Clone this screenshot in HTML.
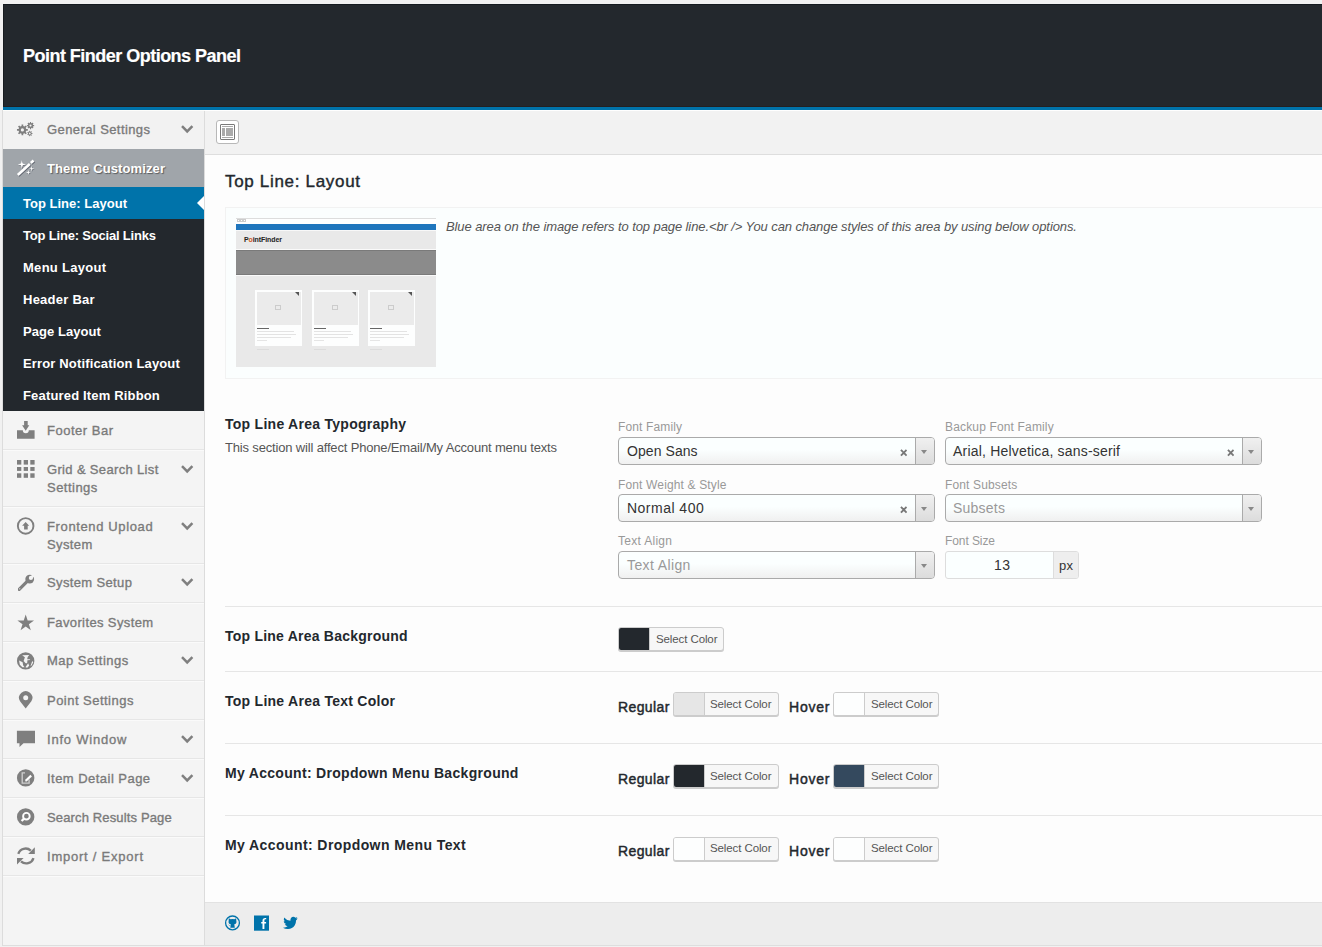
<!DOCTYPE html>
<html><head><meta charset="utf-8">
<style>
*{box-sizing:border-box;margin:0;padding:0}
html,body{width:1322px;height:947px;overflow:hidden;background:#f1f1f1;font-family:"Liberation Sans",sans-serif;position:relative}
.a{position:absolute}
.t{position:absolute;white-space:nowrap;line-height:1}
#hdr{left:3px;top:4px;width:1319px;height:103px;background:#23282d;border-top:1px solid #141a20;border-left:1px solid #181c20;border-bottom:1px solid #222022}
#hdrline{left:3px;top:107px;width:1319px;height:3px;background:#0073aa}
#side{left:3px;top:110px;width:202px;height:836px;background:#f4f4f4;border-right:1px solid #dcdcdc;border-bottom:1px solid #dedede}
#toolbar{left:205px;top:110px;width:1117px;height:45px;background:#f2f2f2;border-top:1px solid #fff;border-bottom:1px solid #dedede}
#main{left:205px;top:155px;width:1117px;height:747px;background:#fdfdfd}
#footer{left:205px;top:902px;width:1117px;height:44px;background:#ededed;border-top:1px solid #e2e2e2;border-bottom:1px solid #dedede}
.sep{position:absolute;left:3px;width:201px;height:1px;background:#e6e6e6;box-shadow:0 1px 0 #fafafa}
.rsep{position:absolute;left:225px;width:1097px;height:1px;background:#e6e6e6}
.sel{position:absolute;height:28px;border:1px solid #aaa;border-radius:4px;background:linear-gradient(to bottom,#fbffff 0%,#fbffff 45%,#f0f0f0 100%)}
.sel .ar{position:absolute;right:0;top:0;width:19px;height:26px;border-left:1px solid #aaa;border-radius:0 3px 3px 0;background:linear-gradient(to bottom,#f0f0f0 0%,#dcdcdc 100%)}
.sel .ar:after{content:"";position:absolute;left:5px;top:11.5px;border-left:3px solid transparent;border-right:3px solid transparent;border-top:4.5px solid #888}
.sel .x{position:absolute;right:27px;top:11px;width:7.5px;height:7.5px}
.cb{position:absolute;width:106px;height:24px;border:1px solid #ccc;border-radius:3px;background:#f7f7f7;box-shadow:0 1px 0 #ccc;overflow:hidden}
.cb .sw{position:absolute;left:0;top:0;width:31px;height:22px;border-right:1px solid #ccc}
.ico{position:absolute}
.chev{position:absolute;left:181px;width:13px;height:9px}
</style></head><body>
<div id="hdr" class="a"></div>
<div id="hdrline" class="a"></div>
<div id="side" class="a"></div>
<div class="a" style="left:2px;top:110px;width:1px;height:836px;background:#dcdcdc"></div>
<div class="a" style="left:3px;top:110px;width:1319px;height:1px;background:#fdfdfb"></div>
<!-- sidebar blocks -->
<div class="a" style="left:3px;top:111px;width:201px;height:38px;background:#f2f2f2"></div>
<div class="a" style="left:3px;top:149px;width:201px;height:38px;background:#a0a5aa"></div>
<div class="a" style="left:3px;top:187px;width:201px;height:32px;background:#0073aa"></div>
<div class="a" style="left:3px;top:219px;width:201px;height:192px;background:#23282d"></div>
<div class="a" style="left:197px;top:196px;width:0;height:0;border-top:7px solid transparent;border-bottom:7px solid transparent;border-right:7px solid #fff"></div>
<div class="sep" style="top:449px"></div>
<div class="sep" style="top:506px"></div>
<div class="sep" style="top:563px"></div>
<div class="sep" style="top:602px"></div>
<div class="sep" style="top:641px"></div>
<div class="sep" style="top:680px"></div>
<div class="sep" style="top:719px"></div>
<div class="sep" style="top:758px"></div>
<div class="sep" style="top:797px"></div>
<div class="sep" style="top:836px"></div>
<div class="sep" style="top:875px"></div>

<div id="toolbar" class="a"></div>
<div class="a" style="left:216px;top:120px;width:23px;height:24px;border:1px solid #b8b8b8;border-radius:3px;background:#fff"></div>
<div class="a" style="left:220px;top:124px;width:15px;height:16px;border:1px solid #7a7a7a;border-radius:1px;background:#fff"></div>
<div class="a" style="left:222px;top:126px;width:11px;height:1px;background:#aaa"></div>
<div class="a" style="left:222px;top:128px;width:3px;height:8px;background:#aaa"></div>
<div class="a" style="left:226px;top:128px;width:7px;height:8px;background:#aaa"></div>
<div class="a" style="left:222px;top:137px;width:11px;height:1px;background:#aaa"></div>

<div id="main" class="a"></div>
<!-- info box -->
<div class="a" style="left:225px;top:207px;width:1097px;height:172px;background:#fbfefe;border:1px solid #f2f2f2;border-right:none"></div>
<!-- preview image -->
<div class="a" style="left:236px;top:218px;width:200px;height:149px;background:#e9e9e9;overflow:hidden"><div class="a" style="left:0;top:0;width:200px;height:6px;background:#fff;border-top:1px solid #ddd"></div><div class="a" style="left:1px;top:1px;width:3px;height:3px;border:1px solid #ccc"></div><div class="a" style="left:4px;top:1px;width:3px;height:3px;border:1px solid #ccc"></div><div class="a" style="left:7px;top:1px;width:3px;height:3px;border:1px solid #ccc"></div><div class="a" style="left:0;top:6px;width:200px;height:6px;background:#1f76bd"></div><div class="a" style="left:0;top:12px;width:200px;height:1px;background:#f8f8f8"></div><div class="a" style="left:0;top:31px;width:200px;height:1px;background:#fafafa"></div><div class="a" style="left:8px;top:18px;font:bold 7px/1 'Liberation Sans';color:#222;letter-spacing:-0.1px">P<span style="color:#d35a20">o</span>intFinder</div><div class="a" style="left:0;top:32px;width:200px;height:25px;background:#8b8b8b;border-top:1px solid #7a7a7a;border-bottom:1px solid #7a7a7a"></div><div class="a" style="left:0;top:57px;width:200px;height:1px;background:#fafafa"></div><div class="a" style="left:19px;top:72px;width:47px;height:56px;background:#fdfefe"><div class="a" style="left:2px;top:2px;width:44px;height:33px;background:#ebebeb"></div><div class="a" style="left:40px;top:2px;width:0;height:0;border-top:4px solid #555;border-left:4px solid transparent"></div><div class="a" style="left:20px;top:15px;width:6px;height:5px;border:1px solid #ccc"></div><div class="a" style="left:2px;top:38px;width:12px;height:1px;background:#666"></div><div class="a" style="left:2px;top:41px;width:37px;height:1px;background:#e3e3e3"></div><div class="a" style="left:2px;top:44px;width:39px;height:1px;background:#e3e3e3"></div><div class="a" style="left:2px;top:47px;width:34px;height:1px;background:#e3e3e3"></div><div class="a" style="left:2px;top:50px;width:10px;height:1px;background:#e5e5e5"></div></div><div class="a" style="left:21px;top:131px;width:12px;height:1px;background:#dcdcdc"></div><div class="a" style="left:76px;top:72px;width:47px;height:56px;background:#fdfefe"><div class="a" style="left:2px;top:2px;width:44px;height:33px;background:#ebebeb"></div><div class="a" style="left:40px;top:2px;width:0;height:0;border-top:4px solid #555;border-left:4px solid transparent"></div><div class="a" style="left:20px;top:15px;width:6px;height:5px;border:1px solid #ccc"></div><div class="a" style="left:2px;top:38px;width:12px;height:1px;background:#666"></div><div class="a" style="left:2px;top:41px;width:37px;height:1px;background:#e3e3e3"></div><div class="a" style="left:2px;top:44px;width:39px;height:1px;background:#e3e3e3"></div><div class="a" style="left:2px;top:47px;width:34px;height:1px;background:#e3e3e3"></div><div class="a" style="left:2px;top:50px;width:10px;height:1px;background:#e5e5e5"></div></div><div class="a" style="left:78px;top:131px;width:12px;height:1px;background:#dcdcdc"></div><div class="a" style="left:132px;top:72px;width:47px;height:56px;background:#fdfefe"><div class="a" style="left:2px;top:2px;width:44px;height:33px;background:#ebebeb"></div><div class="a" style="left:40px;top:2px;width:0;height:0;border-top:4px solid #555;border-left:4px solid transparent"></div><div class="a" style="left:20px;top:15px;width:6px;height:5px;border:1px solid #ccc"></div><div class="a" style="left:2px;top:38px;width:12px;height:1px;background:#666"></div><div class="a" style="left:2px;top:41px;width:37px;height:1px;background:#e3e3e3"></div><div class="a" style="left:2px;top:44px;width:39px;height:1px;background:#e3e3e3"></div><div class="a" style="left:2px;top:47px;width:34px;height:1px;background:#e3e3e3"></div><div class="a" style="left:2px;top:50px;width:10px;height:1px;background:#e5e5e5"></div></div><div class="a" style="left:134px;top:131px;width:12px;height:1px;background:#dcdcdc"></div></div>

<div class="rsep" style="top:606px"></div>
<div class="rsep" style="top:671px"></div>
<div class="rsep" style="top:743px"></div>
<div class="rsep" style="top:815px"></div>

<!-- selects -->
<div class="sel" style="left:618px;top:437px;width:317px"><svg class="x" viewBox="0 0 8 8"><path d="M1 1L7 7M7 1L1 7" stroke="#777" stroke-width="2"/></svg><div class="ar"></div></div>
<div class="sel" style="left:945px;top:437px;width:317px"><svg class="x" viewBox="0 0 8 8"><path d="M1 1L7 7M7 1L1 7" stroke="#777" stroke-width="2"/></svg><div class="ar"></div></div>
<div class="sel" style="left:618px;top:494px;width:317px"><svg class="x" viewBox="0 0 8 8"><path d="M1 1L7 7M7 1L1 7" stroke="#777" stroke-width="2"/></svg><div class="ar"></div></div>
<div class="sel" style="left:945px;top:494px;width:317px"><div class="ar"></div></div>
<div class="sel" style="left:618px;top:551px;width:317px"><div class="ar"></div></div>
<div class="a" style="left:945px;top:551px;width:134px;height:28px;border:1px solid #ddd;border-radius:3px;background:#fbffff;overflow:hidden"><div class="a" style="left:107px;top:0;width:26px;height:26px;background:#eee;border-left:1px solid #ddd"></div></div>

<div class="cb" style="left:618px;top:627px"><div class="sw" style="background:#23282d"></div></div>
<div class="cb" style="left:673px;top:692px"><div class="sw" style="background:#e6e6e6"></div></div>
<div class="cb" style="left:833px;top:692px"><div class="sw" style="background:#fdfefe"></div></div>
<div class="cb" style="left:673px;top:764px"><div class="sw" style="background:#23282d"></div></div>
<div class="cb" style="left:833px;top:764px"><div class="sw" style="background:#34495e"></div></div>
<div class="cb" style="left:673px;top:837px"><div class="sw" style="background:#fdfefe"></div></div>
<div class="cb" style="left:833px;top:837px"><div class="sw" style="background:#fdfefe"></div></div>

<div id="footer" class="a"></div>
<svg class="ico" style="left:14px;top:118px" width="24" height="24" viewBox="0 0 24 24"><path fill-rule="evenodd" fill="#7f7f7f" d="M12.21 11.06 L13.83 11.04 L13.83 12.76 L12.21 12.74 L11.68 14.00 L12.85 15.13 L11.63 16.35 L10.50 15.18 L9.24 15.71 L9.26 17.33 L7.54 17.33 L7.56 15.71 L6.30 15.18 L5.17 16.35 L3.95 15.13 L5.12 14.00 L4.59 12.74 L2.97 12.76 L2.97 11.04 L4.59 11.06 L5.12 9.80 L3.95 8.67 L5.17 7.45 L6.30 8.62 L7.56 8.09 L7.54 6.47 L9.26 6.47 L9.24 8.09 L10.50 8.62 L11.63 7.45 L12.85 8.67 L11.68 9.80 Z M10.00 11.90 A1.6 1.6 0 1 0 6.80 11.90 A1.6 1.6 0 1 0 10.00 11.90 Z M19.14 7.02 L20.15 7.02 L20.15 8.18 L19.14 8.18 L18.77 9.06 L19.49 9.77 L18.67 10.59 L17.96 9.87 L17.08 10.24 L17.08 11.25 L15.92 11.25 L15.92 10.24 L15.04 9.87 L14.33 10.59 L13.51 9.77 L14.23 9.06 L13.86 8.18 L12.85 8.18 L12.85 7.02 L13.86 7.02 L14.23 6.14 L13.51 5.43 L14.33 4.61 L15.04 5.33 L15.92 4.96 L15.92 3.95 L17.08 3.95 L17.08 4.96 L17.96 5.33 L18.67 4.61 L19.49 5.43 L18.77 6.14 Z M17.60 7.60 A1.1 1.1 0 1 0 15.40 7.60 A1.1 1.1 0 1 0 17.60 7.60 Z M17.64 15.04 L18.46 15.02 L18.46 15.98 L17.64 15.96 L17.31 16.65 L17.83 17.28 L17.08 17.88 L16.59 17.23 L15.84 17.40 L15.68 18.20 L14.74 17.98 L14.94 17.19 L14.34 16.72 L13.62 17.09 L13.20 16.22 L13.94 15.88 L13.94 15.12 L13.20 14.78 L13.62 13.91 L14.34 14.28 L14.94 13.81 L14.74 13.02 L15.68 12.80 L15.84 13.60 L16.59 13.77 L17.08 13.12 L17.83 13.72 L17.31 14.35 Z M16.70 15.50 A0.9 0.9 0 1 0 14.90 15.50 A0.9 0.9 0 1 0 16.70 15.50 Z"/></svg>
<svg class="ico" style="left:14px;top:156px" width="24" height="24" viewBox="0 0 24 24"><line x1="4.5" y1="19.7" x2="16.5" y2="8.7" stroke="rgba(40,45,60,.55)" stroke-width="2.6"/><line x1="17.5" y1="7.7" x2="20.3" y2="5.3" stroke="rgba(40,45,60,.55)" stroke-width="2.6"/><line x1="3.8" y1="19.0" x2="15.8" y2="8.0" stroke="#fff" stroke-width="2.6"/><line x1="16.8" y1="7.0" x2="19.6" y2="4.6" stroke="#fff" stroke-width="2.6"/><path d="M8.5 4.8 L9.424 8.076 L12.7 9.0 L9.424 9.924 L8.5 13.2 L7.576 9.924 L4.3 9.0 L7.576 8.076 Z" fill="rgba(40,45,60,.55)"/><path d="M7.9 4.2 L8.824 7.476 L12.100000000000001 8.4 L8.824 9.324 L7.9 12.600000000000001 L6.976 9.324 L3.7 8.4 L6.976 7.476 Z" fill="#fff"/><path d="M18.2 10.6 L18.772 12.628 L20.8 13.2 L18.772 13.771999999999998 L18.2 15.799999999999999 L17.628 13.771999999999998 L15.6 13.2 L17.628 12.628 Z" fill="rgba(40,45,60,.55)"/><path d="M17.7 10.1 L18.272 12.128 L20.3 12.7 L18.272 13.271999999999998 L17.7 15.299999999999999 L17.128 13.271999999999998 L15.1 12.7 L17.128 12.128 Z" fill="#fff"/><path d="M14.9 14.4 L15.472000000000001 16.428 L17.5 17.0 L15.472000000000001 17.572 L14.9 19.6 L14.328 17.572 L12.3 17.0 L14.328 16.428 Z" fill="rgba(40,45,60,.55)"/><path d="M14.4 13.9 L14.972000000000001 15.928 L17.0 16.5 L14.972000000000001 17.072 L14.4 19.1 L13.828 17.072 L11.8 16.5 L13.828 15.928 Z" fill="#fff"/></svg>
<svg class="ico" style="left:14px;top:418px" width="24" height="24" viewBox="0 0 24 24"><path fill="#7f7f7f" d="M10.1 3 H13.7 V7.35 H15.3 L11.7 12.7 L8.1 7.35 H10.1 Z M3 12.2 H8.8 A3 3 0 0 0 14.8 12.2 H20.6 V20.8 H3 Z"/></svg>
<svg class="ico" style="left:14px;top:457px" width="24" height="24" viewBox="0 0 24 24"><rect x="3.0" y="3.0" width="4.3" height="4.6" fill="#7f7f7f"/><rect x="3.0" y="10.0" width="4.3" height="3.9" fill="#7f7f7f"/><rect x="3.0" y="16.3" width="4.3" height="4.5" fill="#7f7f7f"/><rect x="9.7" y="3.0" width="4.3" height="4.6" fill="#7f7f7f"/><rect x="9.7" y="10.0" width="4.3" height="3.9" fill="#7f7f7f"/><rect x="9.7" y="16.3" width="4.3" height="4.5" fill="#7f7f7f"/><rect x="16.3" y="3.0" width="4.3" height="4.6" fill="#7f7f7f"/><rect x="16.3" y="10.0" width="4.3" height="3.9" fill="#7f7f7f"/><rect x="16.3" y="16.3" width="4.3" height="4.5" fill="#7f7f7f"/></svg>
<svg class="ico" style="left:14px;top:514px" width="24" height="24" viewBox="0 0 24 24"><circle cx="11.66" cy="11.9" r="7.8" stroke="#7f7f7f" stroke-width="1.9" fill="none"/><path fill="#7f7f7f" d="M8.1 11.7 L11.65 8.0 L15.2 11.7 H13.7 V15.5 H10.1 V11.7 Z"/></svg>
<svg class="ico" style="left:14px;top:571px" width="24" height="24" viewBox="0 0 24 24"><defs><mask id="wm"><rect x="0" y="0" width="24" height="24" fill="#fff"/><circle cx="16.9" cy="6.9" r="2.1" fill="#000"/><path d="M15.98 5.98 L17.82 7.82 L22.06 3.58 L20.22 1.74 Z" fill="#000"/><circle cx="5.7" cy="17.8" r="0.75" fill="#666"/></mask></defs><g mask="url(#wm)"><line x1="5.2" y1="18.3" x2="13.2" y2="10.4" stroke="#7f7f7f" stroke-width="3.2" stroke-linecap="round"/><circle cx="15.7" cy="8.1" r="4.4" fill="#7f7f7f"/></g></svg>
<svg class="ico" style="left:14px;top:611px" width="24" height="24" viewBox="0 0 24 24"><path fill="#7f7f7f" d="M11.70 3.40 L13.66 9.45 L20.02 9.45 L14.88 13.18 L16.84 19.23 L11.70 15.49 L6.56 19.23 L8.52 13.18 L3.38 9.45 L9.74 9.45 Z"/></svg>
<svg class="ico" style="left:14px;top:649px" width="24" height="24" viewBox="0 0 24 24"><circle cx="11.66" cy="11.9" r="8.7" fill="#7f7f7f"/><path fill="#f4f4f4" d="M8.11 6.34 L15.21 6.08 L13.68 8.11 L13.18 10.14 L15.71 10.14 L16.22 10.90 L13.43 11.15 L13.18 14.19 L11.66 14.19 L9.63 11.91 L10.90 8.36 Z M5.07 11.40 L8.62 13.18 L9.12 16.22 L10.64 18.25 L8.36 18.25 L5.83 15.71 Z M11.40 18.25 L14.19 14.19 L15.21 16.73 L13.18 18.75 Z M18.25 11.91 L19.26 13.18 L17.74 16.22 L16.47 17.23 L17.49 14.19 Z"/></svg>
<svg class="ico" style="left:14px;top:688px" width="24" height="24" viewBox="0 0 24 24"><path fill="#7f7f7f" d="M11.7 20.6 L6.04 13.2 A6.6 6.6 0 1 1 17.36 13.2 Z"/><circle cx="11.7" cy="9.7" r="2.5" fill="#f4f4f4"/></svg>
<svg class="ico" style="left:14px;top:727px" width="24" height="24" viewBox="0 0 24 24"><path fill="#7f7f7f" d="M2.9 3.8 H21 V16.2 H9.5 L5.5 20 V16.2 H2.9 Z"/></svg>
<svg class="ico" style="left:14px;top:766px" width="24" height="24" viewBox="0 0 24 24"><circle cx="11.66" cy="11.9" r="8.7" fill="#7f7f7f"/><path d="M11 6.9 H8.2 V17.1 H15.1 V13.5" stroke="#d0d0d0" stroke-width="1.3" fill="none"/><line x1="11.8" y1="14.8" x2="17.2" y2="9.6" stroke="#fff" stroke-width="2.2"/><path d="M11.3 15.4 L11.2 13.6 L12.8 15.2 Z" fill="#eee"/></svg>
<svg class="ico" style="left:14px;top:805px" width="24" height="24" viewBox="0 0 24 24"><circle cx="11.66" cy="11.9" r="8.7" fill="#7f7f7f"/><circle cx="12.4" cy="11.15" r="3.3" stroke="#fff" stroke-width="1.9" fill="none"/><line x1="10.0" y1="13.6" x2="7.6" y2="16.0" stroke="#fff" stroke-width="2.2"/></svg>
<svg class="ico" style="left:14px;top:844px" width="24" height="24" viewBox="0 0 24 24"><path d="M4.3 9.9 A7.6 7.6 0 0 1 16.8 6.6" stroke="#7f7f7f" stroke-width="2.3" fill="none"/><path d="M20.8 3.3 V10.0 H14.2 Z" fill="#7f7f7f"/><path d="M19.5 14.1 A7.6 7.6 0 0 1 7.0 17.3" stroke="#7f7f7f" stroke-width="2.3" fill="none"/><path d="M3.0 20.5 V13.9 H9.6 Z" fill="#7f7f7f"/></svg>
<svg class="ico" style="left:180px;top:124px" width="15" height="11" viewBox="0 0 15 11"><path d="M2 2.2 L7.2 7.4 L12.4 2.2" stroke="#7f7f7f" stroke-width="2.5" fill="none"/></svg>
<svg class="ico" style="left:180px;top:464px" width="15" height="11" viewBox="0 0 15 11"><path d="M2 2.2 L7.2 7.4 L12.4 2.2" stroke="#7f7f7f" stroke-width="2.5" fill="none"/></svg>
<svg class="ico" style="left:180px;top:521px" width="15" height="11" viewBox="0 0 15 11"><path d="M2 2.2 L7.2 7.4 L12.4 2.2" stroke="#7f7f7f" stroke-width="2.5" fill="none"/></svg>
<svg class="ico" style="left:180px;top:577px" width="15" height="11" viewBox="0 0 15 11"><path d="M2 2.2 L7.2 7.4 L12.4 2.2" stroke="#7f7f7f" stroke-width="2.5" fill="none"/></svg>
<svg class="ico" style="left:180px;top:655px" width="15" height="11" viewBox="0 0 15 11"><path d="M2 2.2 L7.2 7.4 L12.4 2.2" stroke="#7f7f7f" stroke-width="2.5" fill="none"/></svg>
<svg class="ico" style="left:180px;top:734px" width="15" height="11" viewBox="0 0 15 11"><path d="M2 2.2 L7.2 7.4 L12.4 2.2" stroke="#7f7f7f" stroke-width="2.5" fill="none"/></svg>
<svg class="ico" style="left:180px;top:773px" width="15" height="11" viewBox="0 0 15 11"><path d="M2 2.2 L7.2 7.4 L12.4 2.2" stroke="#7f7f7f" stroke-width="2.5" fill="none"/></svg>
<svg class="ico" style="left:224px;top:914px" width="18" height="18" viewBox="0 0 18 18"><circle cx="8.5" cy="8.9" r="6.9" stroke="#0073aa" stroke-width="1.3" fill="none"/><path fill="#0073aa" d="M4.8 4.3 L6.6 5.3 Q8.5 4.8 10.4 5.3 L12.1 4.3 L12.3 6.6 Q12.8 8.6 12 9.4 Q11.2 10.1 10.3 10.2 L10.8 13.8 H6.3 L6.8 10.2 Q5.6 10.1 5 9.4 Q4.2 8.6 4.7 6.6 Z"/><path d="M6.5 11.6 Q5.2 11.8 4.6 10.8" stroke="#5aa0cc" stroke-width="0.9" fill="none"/></svg>
<svg class="ico" style="left:254px;top:915px" width="16" height="16" viewBox="0 0 16 16"><rect x="0" y="0.5" width="15" height="15.2" fill="#0073aa"/><path fill="#fff" d="M8.5 13.9 V8.4 H7.2 V7.1 H8.5 V5.6 Q8.5 2.9 11.2 2.9 H12.2 V4.2 H11.3 Q10.4 4.2 10.4 5.2 V7.1 H12.1 V8.4 H10.4 V13.9 Z"/></svg>
<svg class="ico" style="left:282px;top:915px" width="17" height="16" viewBox="0 0 17 16"><path fill="#0073aa" d="M15.6 3.2 Q14.9 3.6 14 3.7 Q15 3.1 15.3 2 Q14.4 2.5 13.4 2.7 Q12.5 1.8 11.3 1.8 Q8.6 2 8.4 5 Q8.4 5.4 8.5 5.7 Q4.7 5.5 2.1 2.4 Q1.2 4.5 3 6.3 Q2.3 6.3 1.7 5.9 Q1.8 8.3 4.1 9 Q3.4 9.2 2.7 9.1 Q3.4 11.2 5.6 11.3 Q3.5 12.9 0.9 12.7 Q3.2 14.2 6 14.1 Q10.3 14 12.8 10.3 Q14 8.3 14 6 V5.4 Q15 4.4 15.6 3.2 Z"/></svg>
<div class="t" style="left:23px;top:47px;font-size:18px;font-weight:bold;color:#fff;letter-spacing:-0.521px;-webkit-text-stroke:0.2px #fff;">Point Finder Options Panel</div>
<div class="t" style="left:47px;top:123px;font-size:13px;font-weight:normal;color:#7a7a7a;letter-spacing:0.410px;-webkit-text-stroke:0.35px #7a7a7a;">General Settings</div>
<div class="t" style="left:47px;top:162px;font-size:13px;font-weight:bold;color:#fff;letter-spacing:0.113px;text-shadow:1px 1px 1px rgba(0,0,0,.45);">Theme Customizer</div>
<div class="t" style="left:23px;top:197px;font-size:13px;font-weight:bold;color:#fff;letter-spacing:0.017px;">Top Line: Layout</div>
<div class="t" style="left:23px;top:229px;font-size:13px;font-weight:bold;color:#fff;letter-spacing:-0.190px;">Top Line: Social Links</div>
<div class="t" style="left:23px;top:261px;font-size:13px;font-weight:bold;color:#fff;letter-spacing:0.283px;">Menu Layout</div>
<div class="t" style="left:23px;top:293px;font-size:13px;font-weight:bold;color:#fff;letter-spacing:0.247px;">Header Bar</div>
<div class="t" style="left:23px;top:325px;font-size:13px;font-weight:bold;color:#fff;letter-spacing:0.050px;">Page Layout</div>
<div class="t" style="left:23px;top:357px;font-size:13px;font-weight:bold;color:#fff;letter-spacing:0.153px;">Error Notification Layout</div>
<div class="t" style="left:23px;top:389px;font-size:13px;font-weight:bold;color:#fff;letter-spacing:0.167px;">Featured Item Ribbon</div>
<div class="t" style="left:47px;top:424px;font-size:13px;font-weight:normal;color:#7a7a7a;letter-spacing:0.509px;-webkit-text-stroke:0.35px #7a7a7a;">Footer Bar</div>
<div class="t" style="left:47px;top:463px;font-size:13px;font-weight:normal;color:#7a7a7a;letter-spacing:0.341px;-webkit-text-stroke:0.35px #7a7a7a;">Grid &amp; Search List</div>
<div class="t" style="left:47px;top:481px;font-size:13px;font-weight:normal;color:#7a7a7a;letter-spacing:0.474px;-webkit-text-stroke:0.35px #7a7a7a;">Settings</div>
<div class="t" style="left:47px;top:520px;font-size:13px;font-weight:normal;color:#7a7a7a;letter-spacing:0.633px;-webkit-text-stroke:0.35px #7a7a7a;">Frontend Upload</div>
<div class="t" style="left:47px;top:538px;font-size:13px;font-weight:normal;color:#7a7a7a;letter-spacing:0.391px;-webkit-text-stroke:0.35px #7a7a7a;">System</div>
<div class="t" style="left:47px;top:576px;font-size:13px;font-weight:normal;color:#7a7a7a;letter-spacing:0.360px;-webkit-text-stroke:0.35px #7a7a7a;">System Setup</div>
<div class="t" style="left:47px;top:616px;font-size:13px;font-weight:normal;color:#7a7a7a;letter-spacing:0.379px;-webkit-text-stroke:0.35px #7a7a7a;">Favorites System</div>
<div class="t" style="left:47px;top:654px;font-size:13px;font-weight:normal;color:#7a7a7a;letter-spacing:0.484px;-webkit-text-stroke:0.35px #7a7a7a;">Map Settings</div>
<div class="t" style="left:47px;top:694px;font-size:13px;font-weight:normal;color:#7a7a7a;letter-spacing:0.475px;-webkit-text-stroke:0.35px #7a7a7a;">Point Settings</div>
<div class="t" style="left:47px;top:733px;font-size:13px;font-weight:normal;color:#7a7a7a;letter-spacing:0.795px;-webkit-text-stroke:0.35px #7a7a7a;">Info Window</div>
<div class="t" style="left:47px;top:772px;font-size:13px;font-weight:normal;color:#7a7a7a;letter-spacing:0.466px;-webkit-text-stroke:0.35px #7a7a7a;">Item Detail Page</div>
<div class="t" style="left:47px;top:811px;font-size:13px;font-weight:normal;color:#7a7a7a;letter-spacing:0.143px;-webkit-text-stroke:0.35px #7a7a7a;">Search Results Page</div>
<div class="t" style="left:47px;top:850px;font-size:13px;font-weight:normal;color:#7a7a7a;letter-spacing:0.768px;-webkit-text-stroke:0.35px #7a7a7a;">Import / Export</div>
<div class="t" style="left:225px;top:173px;font-size:17px;font-weight:normal;color:#23282d;letter-spacing:0.682px;-webkit-text-stroke:0.4px #23282d;">Top Line: Layout</div>
<div class="t" style="left:446px;top:220px;font-size:13px;font-weight:normal;color:#555;letter-spacing:-0.095px;font-style:italic;">Blue area on the image refers to top page line.&lt;br /&gt; You can change styles of this area by using below options.</div>
<div class="t" style="left:225px;top:417px;font-size:14px;font-weight:bold;color:#23282d;letter-spacing:0.271px;">Top Line Area Typography</div>
<div class="t" style="left:225px;top:441px;font-size:13px;font-weight:normal;color:#555;letter-spacing:-0.167px;">This section will affect Phone/Email/My Account menu texts</div>
<div class="t" style="left:225px;top:629px;font-size:14px;font-weight:bold;color:#23282d;letter-spacing:0.228px;">Top Line Area Background</div>
<div class="t" style="left:225px;top:694px;font-size:14px;font-weight:bold;color:#23282d;letter-spacing:0.266px;">Top Line Area Text Color</div>
<div class="t" style="left:225px;top:766px;font-size:14px;font-weight:bold;color:#23282d;letter-spacing:0.309px;">My Account: Dropdown Menu Background</div>
<div class="t" style="left:225px;top:838px;font-size:14px;font-weight:bold;color:#23282d;letter-spacing:0.415px;">My Account: Dropdown Menu Text</div>
<div class="t" style="left:618px;top:421px;font-size:12px;font-weight:normal;color:#999;letter-spacing:0.131px;">Font Family</div>
<div class="t" style="left:945px;top:421px;font-size:12px;font-weight:normal;color:#999;letter-spacing:0.156px;">Backup Font Family</div>
<div class="t" style="left:618px;top:479px;font-size:12px;font-weight:normal;color:#999;letter-spacing:0.143px;">Font Weight &amp; Style</div>
<div class="t" style="left:945px;top:479px;font-size:12px;font-weight:normal;color:#999;letter-spacing:0.135px;">Font Subsets</div>
<div class="t" style="left:618px;top:535px;font-size:12px;font-weight:normal;color:#999;letter-spacing:0.292px;">Text Align</div>
<div class="t" style="left:945px;top:535px;font-size:12px;font-weight:normal;color:#999;letter-spacing:-0.088px;">Font Size</div>
<div class="t" style="left:627px;top:444px;font-size:14px;font-weight:normal;color:#333;letter-spacing:0.067px;">Open Sans</div>
<div class="t" style="left:953px;top:444px;font-size:14px;font-weight:normal;color:#333;letter-spacing:0.192px;">Arial, Helvetica, sans-serif</div>
<div class="t" style="left:627px;top:501px;font-size:14px;font-weight:normal;color:#333;letter-spacing:0.481px;">Normal 400</div>
<div class="t" style="left:953px;top:501px;font-size:14px;font-weight:normal;color:#999;letter-spacing:0.234px;">Subsets</div>
<div class="t" style="left:627px;top:558px;font-size:14px;font-weight:normal;color:#999;letter-spacing:0.385px;">Text Align</div>
<div class="t" style="left:994px;top:558px;font-size:14px;font-weight:normal;color:#333;letter-spacing:0.422px;">13</div>
<div class="t" style="left:1059px;top:559px;font-size:13px;font-weight:normal;color:#333;letter-spacing:0.266px;">px</div>
<div class="t" style="left:656px;top:634px;font-size:11.5px;font-weight:normal;color:#555;letter-spacing:-0.104px;">Select Color</div>
<div class="t" style="left:618px;top:700px;font-size:14px;font-weight:normal;color:#23282d;letter-spacing:0.378px;-webkit-text-stroke:0.45px #23282d;">Regular</div>
<div class="t" style="left:710px;top:699px;font-size:11.5px;font-weight:normal;color:#555;letter-spacing:-0.104px;">Select Color</div>
<div class="t" style="left:789px;top:700px;font-size:14px;font-weight:normal;color:#23282d;letter-spacing:0.785px;-webkit-text-stroke:0.45px #23282d;">Hover</div>
<div class="t" style="left:871px;top:699px;font-size:11.5px;font-weight:normal;color:#555;letter-spacing:-0.104px;">Select Color</div>
<div class="t" style="left:618px;top:772px;font-size:14px;font-weight:normal;color:#23282d;letter-spacing:0.378px;-webkit-text-stroke:0.45px #23282d;">Regular</div>
<div class="t" style="left:710px;top:771px;font-size:11.5px;font-weight:normal;color:#555;letter-spacing:-0.104px;">Select Color</div>
<div class="t" style="left:789px;top:772px;font-size:14px;font-weight:normal;color:#23282d;letter-spacing:0.785px;-webkit-text-stroke:0.45px #23282d;">Hover</div>
<div class="t" style="left:871px;top:771px;font-size:11.5px;font-weight:normal;color:#555;letter-spacing:-0.104px;">Select Color</div>
<div class="t" style="left:618px;top:844px;font-size:14px;font-weight:normal;color:#23282d;letter-spacing:0.378px;-webkit-text-stroke:0.45px #23282d;">Regular</div>
<div class="t" style="left:710px;top:843px;font-size:11.5px;font-weight:normal;color:#555;letter-spacing:-0.104px;">Select Color</div>
<div class="t" style="left:789px;top:844px;font-size:14px;font-weight:normal;color:#23282d;letter-spacing:0.785px;-webkit-text-stroke:0.45px #23282d;">Hover</div>
<div class="t" style="left:871px;top:843px;font-size:11.5px;font-weight:normal;color:#555;letter-spacing:-0.104px;">Select Color</div>
</body></html>
